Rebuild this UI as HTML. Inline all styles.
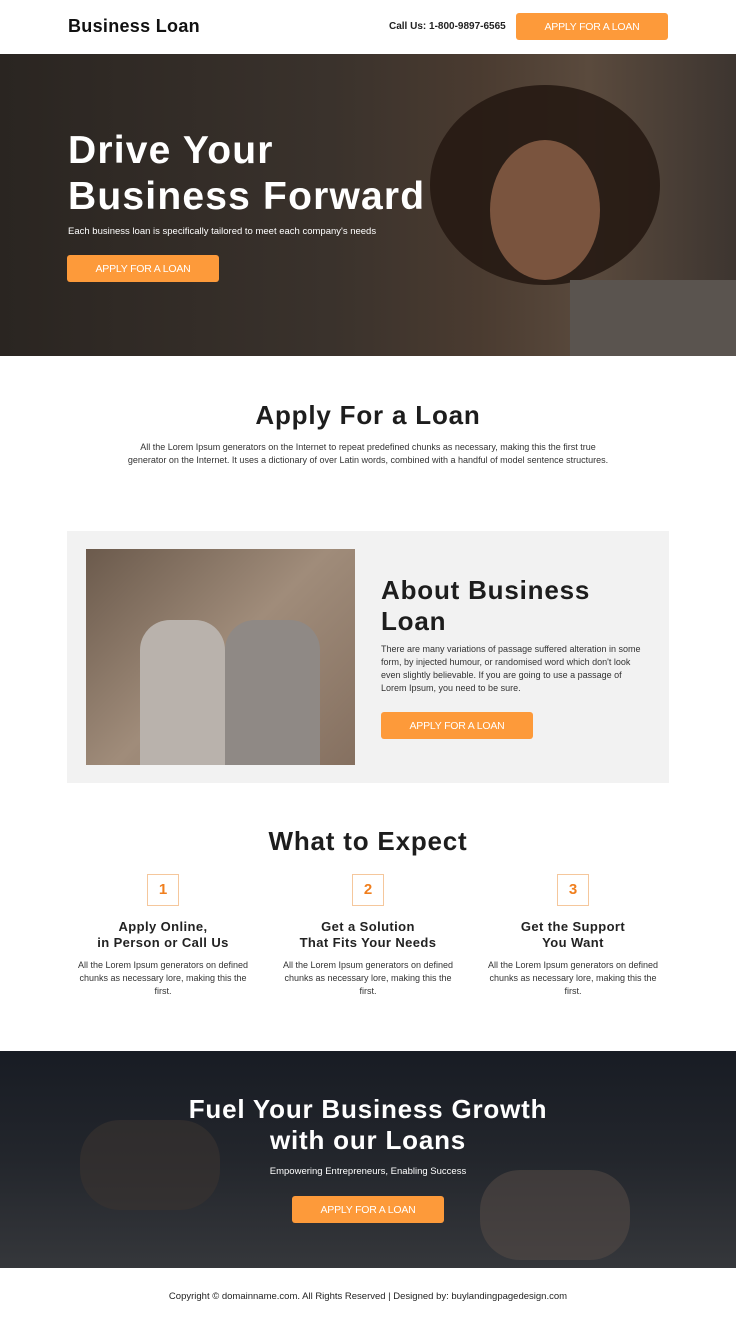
<!DOCTYPE html>
<html><head><meta charset="utf-8"><style>
*{margin:0;padding:0;box-sizing:border-box}
body{width:736px;height:1324px;font-family:"Liberation Sans",sans-serif;background:#fff;color:#222;position:relative;overflow:hidden}
.abs{position:absolute}
.btn{position:absolute;background:#fd9a3a;color:#fff;font-size:10.5px;text-align:center;border-radius:3px;letter-spacing:-0.2px;line-height:28px!important}
h2{font-weight:bold;color:#1d1d1d;letter-spacing:0.8px}
p{font-size:9px;line-height:13px;color:#333}
</style></head><body>
<div class="abs" style="left:68px;top:16px;font-size:18px;font-weight:bold;color:#111;letter-spacing:0.3px">Business Loan</div>
<div class="abs" style="left:389px;top:21px;font-size:10px;font-weight:bold;color:#222">Call Us: 1-800-9897-6565</div>
<div class="btn" style="left:516px;top:13px;width:152px;height:27px">APPLY FOR A LOAN</div>

<div class="abs" style="left:0;top:54px;width:736px;height:302px;background:linear-gradient(90deg,#2a2521 0%,#3a322c 45%,#4a3b30 65%,#5a4a3d 80%,#3d3530 100%)"></div>
<div class="abs" style="left:430px;top:85px;width:230px;height:200px;border-radius:50%;background:#261a13;opacity:.9"></div>
<div class="abs" style="left:490px;top:140px;width:110px;height:140px;border-radius:50%;background:#7a543e"></div>
<div class="abs" style="left:570px;top:280px;width:166px;height:76px;background:#5a544f"></div>
<div class="abs" style="left:68px;top:128px;font-size:39px;font-weight:bold;color:#fff;line-height:46px;letter-spacing:1.2px">Drive Your<br>Business Forward</div>
<div class="abs" style="left:68px;top:226px;font-size:9.5px;color:#fff">Each business loan is specifically tailored to meet each company's needs</div>
<div class="btn" style="left:67px;top:255px;width:152px;height:27px">APPLY FOR A LOAN</div>

<h2 class="abs" style="left:0;width:736px;text-align:center;top:400px;font-size:26px">Apply For a Loan</h2>
<p class="abs" style="left:125px;width:486px;top:441px;text-align:center">All the Lorem Ipsum generators on the Internet to repeat predefined chunks as necessary, making this the first true generator on the Internet. It uses a dictionary of over Latin words, combined with a handful of model sentence structures.</p>

<div class="abs" style="left:67px;top:531px;width:602px;height:252px;background:#f2f2f2"></div>
<div class="abs" style="left:86px;top:549px;width:269px;height:216px;background:linear-gradient(135deg,#6b5a4c,#a08c7a 50%,#857060)"></div>
<div class="abs" style="left:140px;top:620px;width:85px;height:145px;background:#b9b2ac;border-radius:30px 30px 0 0"></div>
<div class="abs" style="left:225px;top:620px;width:95px;height:145px;background:#8f8985;border-radius:30px 30px 0 0"></div>
<h2 class="abs" style="left:381px;top:575px;font-size:26px;line-height:31px">About Business<br>Loan</h2>
<p class="abs" style="left:381px;top:643px;width:262px">There are many variations of passage suffered alteration in some form, by injected humour, or randomised word which don't look even slightly believable. If you are going to use a passage of Lorem Ipsum, you need to be sure.</p>
<div class="btn" style="left:381px;top:712px;width:152px;height:27px">APPLY FOR A LOAN</div>

<h2 class="abs" style="left:0;width:736px;text-align:center;top:826px;font-size:26px">What to Expect</h2>
<div class="abs" style="left:68px;top:874px;width:600px">
<div style="position:absolute;left:0;width:190px;text-align:center">
<div style="margin:0 auto;width:32px;height:32px;border:1.5px solid #f5c79c;color:#f07f1e;font-weight:bold;font-size:15px;line-height:29px">1</div>
<div style="margin-top:13px;font-weight:bold;font-size:13px;line-height:16px;letter-spacing:0.4px">Apply Online,<br>in Person or Call Us</div>
<p style="margin:8px auto 0;width:182px">All the Lorem Ipsum generators on defined chunks as necessary lore, making this the first.</p></div>
<div style="position:absolute;left:205px;width:190px;text-align:center">
<div style="margin:0 auto;width:32px;height:32px;border:1.5px solid #f5c79c;color:#f07f1e;font-weight:bold;font-size:15px;line-height:29px">2</div>
<div style="margin-top:13px;font-weight:bold;font-size:13px;line-height:16px;letter-spacing:0.4px">Get a Solution<br>That Fits Your Needs</div>
<p style="margin:8px auto 0;width:182px">All the Lorem Ipsum generators on defined chunks as necessary lore, making this the first.</p></div>
<div style="position:absolute;left:410px;width:190px;text-align:center">
<div style="margin:0 auto;width:32px;height:32px;border:1.5px solid #f5c79c;color:#f07f1e;font-weight:bold;font-size:15px;line-height:29px">3</div>
<div style="margin-top:13px;font-weight:bold;font-size:13px;line-height:16px;letter-spacing:0.4px">Get the Support<br>You Want</div>
<p style="margin:8px auto 0;width:182px">All the Lorem Ipsum generators on defined chunks as necessary lore, making this the first.</p></div>
</div>

<div class="abs" style="left:0;top:1051px;width:736px;height:217px;background:linear-gradient(180deg,#181c24,#23262c 50%,#35373b)"></div>
<div class="abs" style="left:80px;top:1120px;width:140px;height:90px;background:#3a3331;border-radius:40px;opacity:.6"></div>
<div class="abs" style="left:480px;top:1170px;width:150px;height:90px;background:#5a4d47;border-radius:40px;opacity:.5"></div>
<div class="abs" style="left:0;width:736px;text-align:center;top:1094px;font-size:26px;font-weight:bold;color:#fff;line-height:31px;letter-spacing:0.8px">Fuel Your Business Growth<br>with our Loans</div>
<div class="abs" style="left:0;width:736px;text-align:center;top:1166px;font-size:9.5px;color:#fff">Empowering Entrepreneurs, Enabling Success</div>
<div class="btn" style="left:292px;top:1196px;width:152px;height:27px">APPLY FOR A LOAN</div>

<div class="abs" style="left:0;width:736px;text-align:center;top:1291px;font-size:9.5px;color:#222">Copyright © domainname.com. All Rights Reserved | Designed by: buylandingpagedesign.com</div>
</body></html>
